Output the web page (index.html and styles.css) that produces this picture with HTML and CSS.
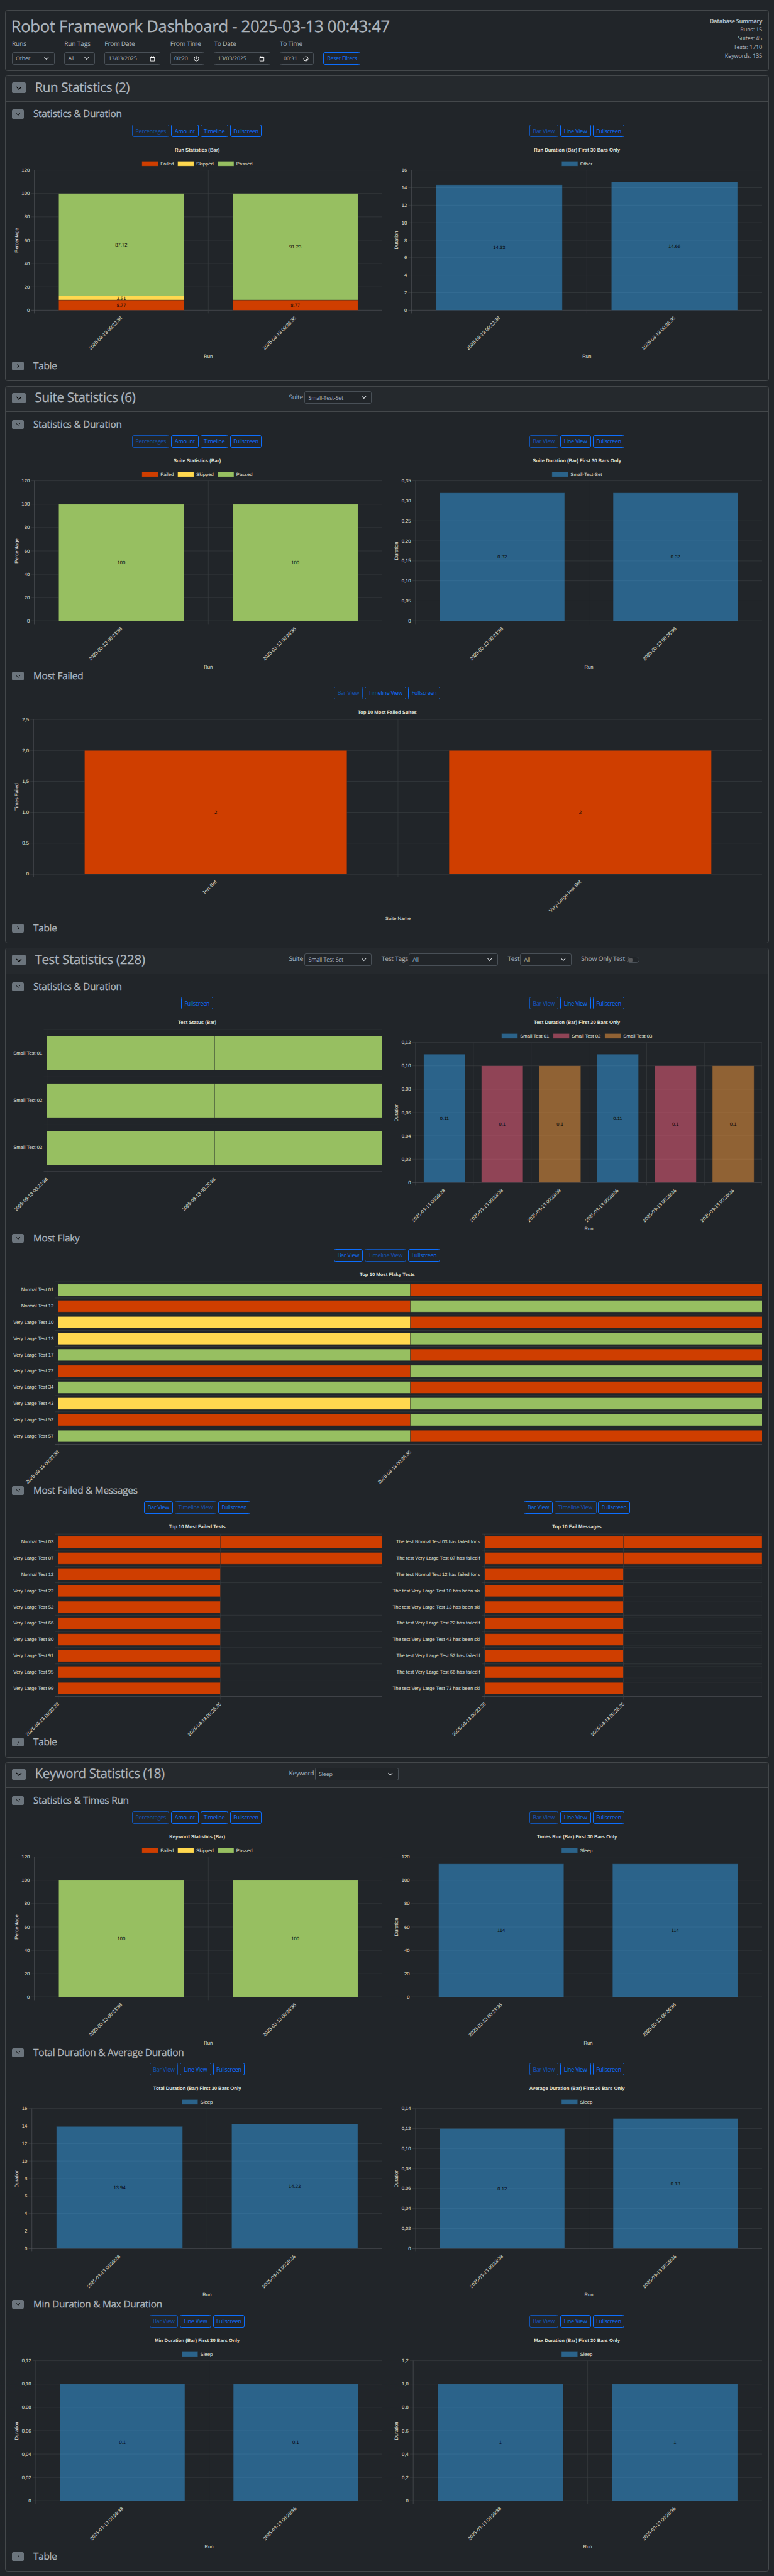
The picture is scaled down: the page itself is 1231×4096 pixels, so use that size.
FILE: index.html
```html
<!DOCTYPE html>
<html lang="en">
<head>
<meta charset="utf-8">
<title>Robot Framework Dashboard</title>
<link rel="stylesheet" href="styles.css">
</head>
<body>
<svg class="defs" aria-hidden="true">
  <symbol id="down" viewBox="0 0 16 16"><polyline points="2,4.5 8,11.5 14,4.5"/></symbol>
  <symbol id="right" viewBox="0 0 16 16"><polyline points="5.5,2.5 10.5,8 5.5,13.5"/></symbol>
  <symbol id="caret" viewBox="0 0 16 16"><polyline points="2.5,5 8,10.8 13.5,5"/></symbol>
  <symbol id="calendar" viewBox="0 0 14 14"><path d="M2 2.6h10v10H2z"/><path d="M2 3.6h10M4.2 .8v2M9.8 .8v2" stroke-width="2"/></symbol>
  <symbol id="clock" viewBox="0 0 14 14"><circle cx="7" cy="7" r="5.6"/><path d="M7 3.6v3.6l2.4 2"/></symbol>
</svg>
<main class="page">
  <header class="card top">
    <div class="top-main">
      <h1>Robot Framework Dashboard - 2025-03-13 00:43:47</h1>
      <div class="filters">
        <div class="field f-runs"><label>Runs</label><div class="control">Other<svg class="caret"><use href="#caret"/></svg></div></div>
        <div class="field f-tags"><label>Run Tags</label><div class="control">All<svg class="caret"><use href="#caret"/></svg></div></div>
        <div class="field f-date"><label>From Date</label><div class="control">13/03/2025<svg class="pick"><use href="#calendar"/></svg></div></div>
        <div class="field f-time"><label>From Time</label><div class="control">00:20<svg class="pick"><use href="#clock"/></svg></div></div>
        <div class="field f-date"><label>To Date</label><div class="control">13/03/2025<svg class="pick"><use href="#calendar"/></svg></div></div>
        <div class="field f-time"><label>To Time</label><div class="control">00:31<svg class="pick"><use href="#clock"/></svg></div></div>
        <button class="btn w-reset">Reset Filters</button>
      </div>
    </div>
    <div class="summary">
      <b>Database Summary</b>
      <span>Runs: 15</span>
      <span>Suites: 45</span>
      <span>Tests: 1710</span>
      <span>Keywords: 135</span>
    </div>
  </header>

  <section class="card">
    <div class="card-head">
      <div class="head-title"><span class="toggle big"><svg><use href="#down"/></svg></span><h3>Run Statistics (2)</h3></div>
    </div>
    <div class="card-body">
      <div class="block">
        <div class="block-head"><span class="toggle"><svg><use href="#down"/></svg></span><h4>Statistics &amp; Duration</h4></div>
        <div class="charts">
          <div class="panel"><div class="buttons"><button class="btn w-pct" disabled>Percentages</button><button class="btn w-amt">Amount</button><button class="btn w-tl">Timeline</button><button class="btn w-full">Fullscreen</button></div><svg data-chart="runStats"></svg></div>
          <div class="panel"><div class="buttons"><button class="btn w-bar" disabled>Bar View</button><button class="btn w-line">Line View</button><button class="btn w-full">Fullscreen</button></div><svg data-chart="runDuration"></svg></div>
        </div>
      </div>
      <div class="block-head"><span class="toggle"><svg><use href="#right"/></svg></span><h4>Table</h4></div>
    </div>
  </section>

  <section class="card">
    <div class="card-head">
      <div class="head-title"><span class="toggle big"><svg><use href="#down"/></svg></span><h3>Suite Statistics (6)</h3></div>
      <div class="inline i-suite"><label>Suite</label><div class="control">Small-Test-Set<svg class="caret"><use href="#caret"/></svg></div></div>
    </div>
    <div class="card-body">
      <div class="block">
        <div class="block-head"><span class="toggle"><svg><use href="#down"/></svg></span><h4>Statistics &amp; Duration</h4></div>
        <div class="charts">
          <div class="panel"><div class="buttons"><button class="btn w-pct" disabled>Percentages</button><button class="btn w-amt">Amount</button><button class="btn w-tl">Timeline</button><button class="btn w-full">Fullscreen</button></div><svg data-chart="suiteStats"></svg></div>
          <div class="panel"><div class="buttons"><button class="btn w-bar" disabled>Bar View</button><button class="btn w-line">Line View</button><button class="btn w-full">Fullscreen</button></div><svg data-chart="suiteDuration"></svg></div>
        </div>
      </div>
      <div class="block">
        <div class="block-head"><span class="toggle"><svg><use href="#down"/></svg></span><h4>Most Failed</h4></div>
        <div class="charts">
          <div class="panel"><div class="buttons"><button class="btn w-bar" disabled>Bar View</button><button class="btn w-tlv">Timeline View</button><button class="btn w-full">Fullscreen</button></div><svg data-chart="suiteFailed"></svg></div>
        </div>
      </div>
      <div class="block-head"><span class="toggle"><svg><use href="#right"/></svg></span><h4>Table</h4></div>
    </div>
  </section>

  <section class="card">
    <div class="card-head">
      <div class="head-title"><span class="toggle big"><svg><use href="#down"/></svg></span><h3>Test Statistics (228)</h3></div>
      <div class="inline i-suite"><label>Suite</label><div class="control">Small-Test-Set<svg class="caret"><use href="#caret"/></svg></div></div>
      <div class="inline i-tags"><label>Test Tags</label><div class="control">All<svg class="caret"><use href="#caret"/></svg></div></div>
      <div class="inline i-test"><label>Test</label><div class="control">All<svg class="caret"><use href="#caret"/></svg></div></div>
      <div class="inline i-switch"><label>Show Only Test</label><span class="switch"></span></div>
    </div>
    <div class="card-body">
      <div class="block">
        <div class="block-head"><span class="toggle"><svg><use href="#down"/></svg></span><h4>Statistics &amp; Duration</h4></div>
        <div class="charts">
          <div class="panel"><div class="buttons"><button class="btn w-full">Fullscreen</button></div><svg data-chart="testStatus"></svg></div>
          <div class="panel"><div class="buttons"><button class="btn w-bar" disabled>Bar View</button><button class="btn w-line">Line View</button><button class="btn w-full">Fullscreen</button></div><svg data-chart="testDuration"></svg></div>
        </div>
      </div>
      <div class="block">
        <div class="block-head"><span class="toggle"><svg><use href="#down"/></svg></span><h4>Most Flaky</h4></div>
        <div class="charts">
          <div class="panel"><div class="buttons"><button class="btn w-bar">Bar View</button><button class="btn w-tlv" disabled>Timeline View</button><button class="btn w-full">Fullscreen</button></div><svg data-chart="flaky"></svg></div>
        </div>
      </div>
      <div class="block">
        <div class="block-head"><span class="toggle"><svg><use href="#down"/></svg></span><h4>Most Failed &amp; Messages</h4></div>
        <div class="charts">
          <div class="panel"><div class="buttons"><button class="btn w-bar">Bar View</button><button class="btn w-tlv" disabled>Timeline View</button><button class="btn w-full">Fullscreen</button></div><svg data-chart="testFailed"></svg></div>
          <div class="panel"><div class="buttons"><button class="btn w-bar">Bar View</button><button class="btn w-tlv" disabled>Timeline View</button><button class="btn w-full">Fullscreen</button></div><svg data-chart="messages"></svg></div>
        </div>
      </div>
      <div class="block-head"><span class="toggle"><svg><use href="#right"/></svg></span><h4>Table</h4></div>
    </div>
  </section>

  <section class="card">
    <div class="card-head">
      <div class="head-title"><span class="toggle big"><svg><use href="#down"/></svg></span><h3>Keyword Statistics (18)</h3></div>
      <div class="inline i-keyword"><label>Keyword</label><div class="control">Sleep<svg class="caret"><use href="#caret"/></svg></div></div>
    </div>
    <div class="card-body">
      <div class="block">
        <div class="block-head"><span class="toggle"><svg><use href="#down"/></svg></span><h4>Statistics &amp; Times Run</h4></div>
        <div class="charts">
          <div class="panel"><div class="buttons"><button class="btn w-pct" disabled>Percentages</button><button class="btn w-amt">Amount</button><button class="btn w-tl">Timeline</button><button class="btn w-full">Fullscreen</button></div><svg data-chart="keywordStats"></svg></div>
          <div class="panel"><div class="buttons"><button class="btn w-bar" disabled>Bar View</button><button class="btn w-line">Line View</button><button class="btn w-full">Fullscreen</button></div><svg data-chart="timesRun"></svg></div>
        </div>
      </div>
      <div class="block">
        <div class="block-head"><span class="toggle"><svg><use href="#down"/></svg></span><h4>Total Duration &amp; Average Duration</h4></div>
        <div class="charts">
          <div class="panel"><div class="buttons"><button class="btn w-bar" disabled>Bar View</button><button class="btn w-line">Line View</button><button class="btn w-full">Fullscreen</button></div><svg data-chart="totalDuration"></svg></div>
          <div class="panel"><div class="buttons"><button class="btn w-bar" disabled>Bar View</button><button class="btn w-line">Line View</button><button class="btn w-full">Fullscreen</button></div><svg data-chart="averageDuration"></svg></div>
        </div>
      </div>
      <div class="block">
        <div class="block-head"><span class="toggle"><svg><use href="#down"/></svg></span><h4>Min Duration &amp; Max Duration</h4></div>
        <div class="charts">
          <div class="panel"><div class="buttons"><button class="btn w-bar" disabled>Bar View</button><button class="btn w-line">Line View</button><button class="btn w-full">Fullscreen</button></div><svg data-chart="minDuration"></svg></div>
          <div class="panel"><div class="buttons"><button class="btn w-bar" disabled>Bar View</button><button class="btn w-line">Line View</button><button class="btn w-full">Fullscreen</button></div><svg data-chart="maxDuration"></svg></div>
        </div>
      </div>
      <div class="block-head"><span class="toggle"><svg><use href="#right"/></svg></span><h4>Table</h4></div>
    </div>
  </section>
</main>
<script src="charts.js"></script>
</body>
</html>
```

FILE: styles.css
```css
* {
  box-sizing: border-box;
}

html {
  background: #212529;
}

body {
  margin: 0;
  background: #212529;
  color: #adb5bd;
  font-family: "Open Sans", "Noto Sans", sans-serif;
  font-size: 16px;
  line-height: 1.5;
  letter-spacing: -0.025em;
  text-rendering: geometricPrecision;
}

.defs {
  display: none;
}

.page {
  zoom: 0.64115;
  width: 1920px;
  height: 6387px;
  padding: 24.2px 12px 0;
  display: flex;
  flex-direction: column;
  gap: 11px;
}

h1, h3, h4 {
  margin: 0;
  font-weight: 500;
  letter-spacing: -0.016em;
  white-space: nowrap;
  -webkit-text-stroke: 0.5px currentColor;
}

h1 { font-size: 40px; line-height: 48px; margin-left: -2px; letter-spacing: -0.011em; }
h3 { font-size: 32px; line-height: 38px; }
h4 { font-size: 24px; line-height: 22px; }

.card {
  flex: none;
  border: 1px solid #44484b;
  border-radius: 6px;
}

.top {
  display: flex;
  justify-content: space-between;
  height: 152.4px;
  padding: 16px;
}

.filters {
  display: flex;
  align-items: flex-end;
  gap: 24px;
  margin-top: 8px;
}

.field {
  display: flex;
  flex-direction: column;
  gap: 8px;
}

.field label, .inline label {
  line-height: 24px;
  white-space: nowrap;
}

.f-runs { width: 106px; }
.f-tags { width: 76px; }
.f-date { width: 139px; }
.f-time { width: 84.5px; }

.control {
  display: flex;
  align-items: center;
  justify-content: space-between;
  height: 31px;
  padding: 0 11px 0 8px;
  border: 1px solid #495057;
  border-radius: 4px;
  font-size: 14px;
  color: #adb5bd;
  background: #212529;
  white-space: nowrap;
}

.caret {
  width: 15px;
  height: 15px;
  fill: none;
  stroke: #dee2e6;
  stroke-width: 1.8;
}

.pick {
  width: 14px;
  height: 14px;
  fill: none;
  stroke: #fff;
  stroke-width: 1.4;
}

.summary {
  display: flex;
  flex-direction: column;
  align-items: flex-end;
  margin-top: -0.4px;
  font-size: 14.4px;
  line-height: 21.5px;
}

.summary b {
  letter-spacing: -0.045em;
}

.btn {
  flex: none;
  height: 31px;
  padding: 0;
  border: 1px solid #0d6efd;
  border-radius: 4px;
  background: none;
  color: #0d6efd;
  font: inherit;
  font-size: 14px;
  letter-spacing: inherit;
}

.btn:disabled { opacity: 0.65; }

.w-reset { width: 92px; }
.w-pct { width: 92px; }
.w-amt { width: 68px; }
.w-tl { width: 69px; }
.w-full { width: 79px; }
.w-bar { width: 71.5px; }
.w-line { width: 77px; }
.w-tlv { width: 104px; }

.card-head {
  display: flex;
  align-items: center;
  gap: 24px;
  height: 63px;
  padding: 0 16px 6px;
  border-bottom: 1px solid #44484b;
  background: #25292d;
  border-radius: 5px 5px 0 0;
}

.head-title {
  display: flex;
  align-items: center;
  gap: 23px;
  width: 663px;
}

.toggle {
  display: flex;
  align-items: center;
  justify-content: center;
  width: 30px;
  height: 22px;
  border-radius: 4px;
  background: #6c757d;
}

.toggle svg {
  width: 12px;
  height: 12px;
  fill: none;
  stroke: #000;
  stroke-width: 1.9;
}

.toggle.big {
  width: 34px;
  height: 26px;
  margin-top: 2px;
}

.toggle.big svg {
  width: 16px;
  height: 16px;
}

.inline {
  display: flex;
  align-items: center;
  justify-content: space-between;
}

.i-suite { width: 206px; }
.i-suite .control { width: 167px; }
.i-tags { width: 289px; }
.i-tags .control { width: 221.5px; }
.i-test { width: 158px; }
.i-test .control { width: 127px; }
.i-switch { width: 145px; }
.i-keyword { width: 272px; }
.i-keyword .control { width: 207px; }

.switch {
  flex: none;
  width: 32px;
  height: 16px;
  padding: 2px;
  border: 1px solid #495057;
  border-radius: 8px;
  background: #212529;
}

.switch::before {
  content: "";
  display: block;
  width: 11px;
  height: 10px;
  border-radius: 50%;
  background: #58595b;
}

.card-body {
  padding: 20px 16px 25.5px;
}

.block {
  height: 624.8px;
}

.block-head {
  display: flex;
  align-items: center;
  gap: 23px;
  height: 22px;
}

.charts {
  display: flex;
  gap: 24px;
  padding-top: 15.3px;
}

.panel {
  flex: 1;
}

.buttons {
  display: flex;
  justify-content: center;
  gap: 4.5px;
}

.panel > svg {
  display: block;
  width: 100%;
  height: 540px;
  margin-top: 15.7px;
  font-family: "Liberation Sans", Arial, sans-serif;
  font-size: 12px;
  letter-spacing: 0;
}

.label { fill: #e2e2d9; }
.title { font-weight: bold; }
.end { text-anchor: end; }
.middle { text-anchor: middle; }
.value { fill: #08090a; text-anchor: middle; }
.grid { stroke: #3c4043; }
.axis { stroke: #54585c; }
.bar { stroke: rgba(33, 37, 41, 0.5); }
.failed { fill: #cf3e00; }
.skipped { fill: #ffd84f; }
.passed { fill: #97bf61; }
.blue { fill: rgba(54, 162, 235, 0.5); }
.pink { fill: rgba(255, 99, 132, 0.5); }
.orange { fill: rgba(255, 159, 64, 0.5); }
.none { fill: none; stroke: #2b2f33; }
```

FILE: charts.js
```js
const R1 = "2025-03-13 00:23:38";
const R2 = "2025-03-13 00:26:36";
const NS = "http://www.w3.org/2000/svg";
const HALF = 918.7;
const FULL = 1861.7;
const statusLegend = [["Failed", "failed"], ["Skipped", "skipped"], ["Passed", "passed"]];

function series(max, step, digits) {
  const ticks = [];
  for (let i = 0; i * step <= max + step / 10; i++) {
    ticks.push([i * step, i ? (i * step).toFixed(digits).replace(".", ",") : "0"]);
  }
  return { max, ticks };
}

const single = (a, b, cls = "blue") => [[[a, cls]], [[b, cls]]];

const charts = {
  runStats: { title: "Run Statistics (Bar)", legend: statusLegend, left: 55.5, y: "Percentage", axis: series(120, 20, 0),
    bars: [[[8.77, "failed"], [3.51, "skipped"], [87.72, "passed"]], [[8.77, "failed"], [91.23, "passed"]]] },
  runDuration: { title: "Run Duration (Bar) First 30 Bars Only", legend: [["Other", "blue"]], left: 49.3, y: "Duration", axis: series(16, 2, 0), bars: single(14.33, 14.66) },
  suiteStats: { title: "Suite Statistics (Bar)", legend: statusLegend, left: 55.5, y: "Percentage", axis: series(120, 20, 0), bars: single(100, 100, "passed") },
  suiteDuration: { title: "Suite Duration (Bar) First 30 Bars Only", legend: [["Small-Test-Set", "blue"]], left: 59.3, y: "Duration", axis: series(0.35, 0.05, 2), bars: single(0.32, 0.32) },
  suiteFailed: { title: "Top 10 Most Failed Suites", left: 53.5, right: FULL, bottom: 417.8, y: "Times Failed", x: "Suite Name", names: ["Test-Set", "Very-Large-Test-Set"], axis: series(2.5, 0.5, 1), bars: single(2, 2, "failed") },
  testStatus: { title: "Test Status (Bar)", left: 86.7, bottom: 386.6, rows: [["Small Test 01", "PP"], ["Small Test 02", "PP"], ["Small Test 03", "PP"]] },
  testDuration: { title: "Test Duration (Bar) First 30 Bars Only", legend: [["Small Test 01", "blue"], ["Small Test 02", "pink"], ["Small Test 03", "orange"]], left: 59.3, y: "Duration", names: [R1, R1, R1, R2, R2, R2], closed: true, axis: series(0.12, 0.02, 2),
    bars: [[[0.11, "blue"]], [[0.1, "pink"]], [[0.1, "orange"]], [[0.11, "blue"]], [[0.1, "pink"]], [[0.1, "orange"]]] },
  flaky: { title: "Top 10 Most Flaky Tests", left: 114.9, right: FULL, bottom: 437.4, rows: [["Normal Test 01", "PF"], ["Normal Test 12", "FP"], ["Very Large Test 10", "SF"], ["Very Large Test 13", "SP"], ["Very Large Test 17", "PF"], ["Very Large Test 22", "FP"], ["Very Large Test 34", "PF"], ["Very Large Test 43", "SP"], ["Very Large Test 52", "FP"], ["Very Large Test 57", "PF"]] },
  testFailed: { title: "Top 10 Most Failed Tests", left: 114.9, bottom: 437.4, midline: true, rows: [["Normal Test 03", "FF"], ["Very Large Test 07", "FF"], ["Normal Test 12", "F"], ["Very Large Test 22", "F"], ["Very Large Test 52", "F"], ["Very Large Test 66", "F"], ["Very Large Test 80", "F"], ["Very Large Test 91", "F"], ["Very Large Test 95", "F"], ["Very Large Test 99", "F"]] },
  messages: { title: "Top 10 Fail Messages", left: 231, bottom: 437.4, midline: true, rows: [["The test Normal Test 03 has failed for s", "FF"], ["The test Very Large Test 07 has failed f", "FF"], ["The test Normal Test 12 has failed for s", "FN"], ["The test Very Large Test 10 has been ski", "FN"], ["The test Very Large Test 13 has been ski", "FN"], ["The test Very Large Test 22 has failed f", "FN"], ["The test Very Large Test 43 has been ski", "FN"], ["The test Very Large Test 52 has failed f", "FN"], ["The test Very Large Test 66 has failed f", "FN"], ["The test Very Large Test 73 has been ski", "FN"]] },
  keywordStats: { title: "Keyword Statistics (Bar)", legend: statusLegend, left: 55.5, y: "Percentage", axis: series(120, 20, 0), bars: single(100, 100, "passed") },
  timesRun: { title: "Times Run (Bar) First 30 Bars Only", legend: [["Sleep", "blue"]], left: 56, y: "Duration", open: true, axis: series(120, 20, 0), bars: single(114, 114) },
  totalDuration: { title: "Total Duration (Bar) First 30 Bars Only", legend: [["Sleep", "blue"]], left: 49.5, y: "Duration", axis: series(16, 2, 0), bars: single(13.94, 14.23) },
  averageDuration: { title: "Average Duration (Bar) First 30 Bars Only", legend: [["Sleep", "blue"]], left: 59.3, y: "Duration", axis: series(0.14, 0.02, 2), bars: single(0.12, 0.13) },
  minDuration: { title: "Min Duration (Bar) First 30 Bars Only", legend: [["Sleep", "blue"]], left: 59.3, y: "Duration", axis: series(0.12, 0.02, 2), bars: single(0.1, 0.1) },
  maxDuration: { title: "Max Duration (Bar) First 30 Bars Only", legend: [["Sleep", "blue"]], left: 53.3, y: "Duration", axis: series(1.2, 0.2, 1), bars: single(1, 1) }
};

const ruler = document.createElement("canvas").getContext("2d");
ruler.font = '12px "Liberation Sans"';

function draw(svg, c) {
  const add = (tag, attrs, text) => {
    const el = document.createElementNS(NS, tag);
    for (const k in attrs) el.setAttribute(k, attrs[k]);
    if (text !== undefined) el.textContent = text;
    svg.appendChild(el);
  };
  const line = (x1, y1, x2, y2, cls = "grid") => add("line", { x1, y1, x2, y2, class: cls });
  const text = (x, y, s, cls, turn) => add("text", turn ? { x, y, class: cls, transform: `rotate(${turn} ${x} ${y})` } : { x, y, class: cls }, s);
  const bar = (x, y, width, height, cls) => add("rect", { x, y, width, height, class: "bar " + cls });
  const slanted = (x, y, s) => add("text", { x: 0, y: 4.2, class: "label end", transform: `translate(${x} ${y}) rotate(-45)` }, s);

  const { left, right = HALF, bottom = 413.8, legend } = c;
  const top = legend ? 66.5 : 34.5;
  const center = (right + 0.3) / 2;
  text(center, 21, c.title, "label title middle");

  if (legend) {
    const widths = legend.map(([name]) => 46 + ruler.measureText(name).width);
    let x = center - (widths.reduce((a, b) => a + b) + 10 * (legend.length - 1)) / 2;
    legend.forEach(([name, cls], i) => {
      bar(x, 44.4, 40, 12, cls);
      text(x + 46, 54.2, name, "label");
      x += widths[i] + 10;
    });
  }

  if (c.rows) {
    const h = (bottom - top) / c.rows.length;
    const w = (right - left) / 2;
    c.rows.forEach((_, i) => line(left - 8, top + i * h, right, top + i * h));
    line(left - 8, bottom, right, bottom, "axis");
    line(left, top, left, bottom + 8, "axis");
    if (c.midline) line(left + w, top, left + w, bottom + 8);
    const kinds = { P: "passed", F: "failed", S: "skipped", N: "none" };
    c.rows.forEach(([name, states], i) => {
      [...states].forEach((s, j) => bar(left + j * w, top + (i + 0.14) * h, w, 0.72 * h, kinds[s]));
      text(left - 11.5, top + (i + 0.5) * h + 3.4, name, "label end");
    });
    slanted(left, bottom + 17, R1);
    slanted(left + w, bottom + 17, R2);
    return;
  }

  const names = c.names || [R1, R2];
  const w = (right - left) / names.length;
  const scale = (bottom - top) / c.axis.max;
  c.axis.ticks.forEach(([v, label]) => {
    const y = bottom - v * scale;
    line(left - 8, y, right, y, v ? "grid" : "axis");
    text(left - 11.5, y + 4, label, "label end");
  });
  if (!c.open) {
    names.forEach((_, i) => line(left + i * w, top, left + i * w, bottom + 8, i ? "grid" : "axis"));
    if (c.closed) line(right, top, right, bottom + 8);
  }
  c.bars.forEach((stack, i) => {
    let base = bottom;
    stack.forEach(([v, cls]) => {
      const h = v * scale;
      bar(left + (i + 0.14) * w, base - h, 0.72 * w, h, cls);
      base -= h;
    });
    base = bottom;
    stack.forEach(([v]) => {
      const h = v * scale;
      text(left + (i + 0.5) * w, base - h / 2 + 4.5, v, "value");
      base -= h;
    });
    slanted(left + (i + 0.5) * w, bottom + 17, names[i]);
  });
  const mid = (left + right) / 2;
  text(mid, 532, c.x || "Run", "label middle");
  text(15, (top + bottom) / 2, c.y, "label middle", -90);
}

document.querySelectorAll("[data-chart]").forEach(svg => draw(svg, charts[svg.dataset.chart]));
```
